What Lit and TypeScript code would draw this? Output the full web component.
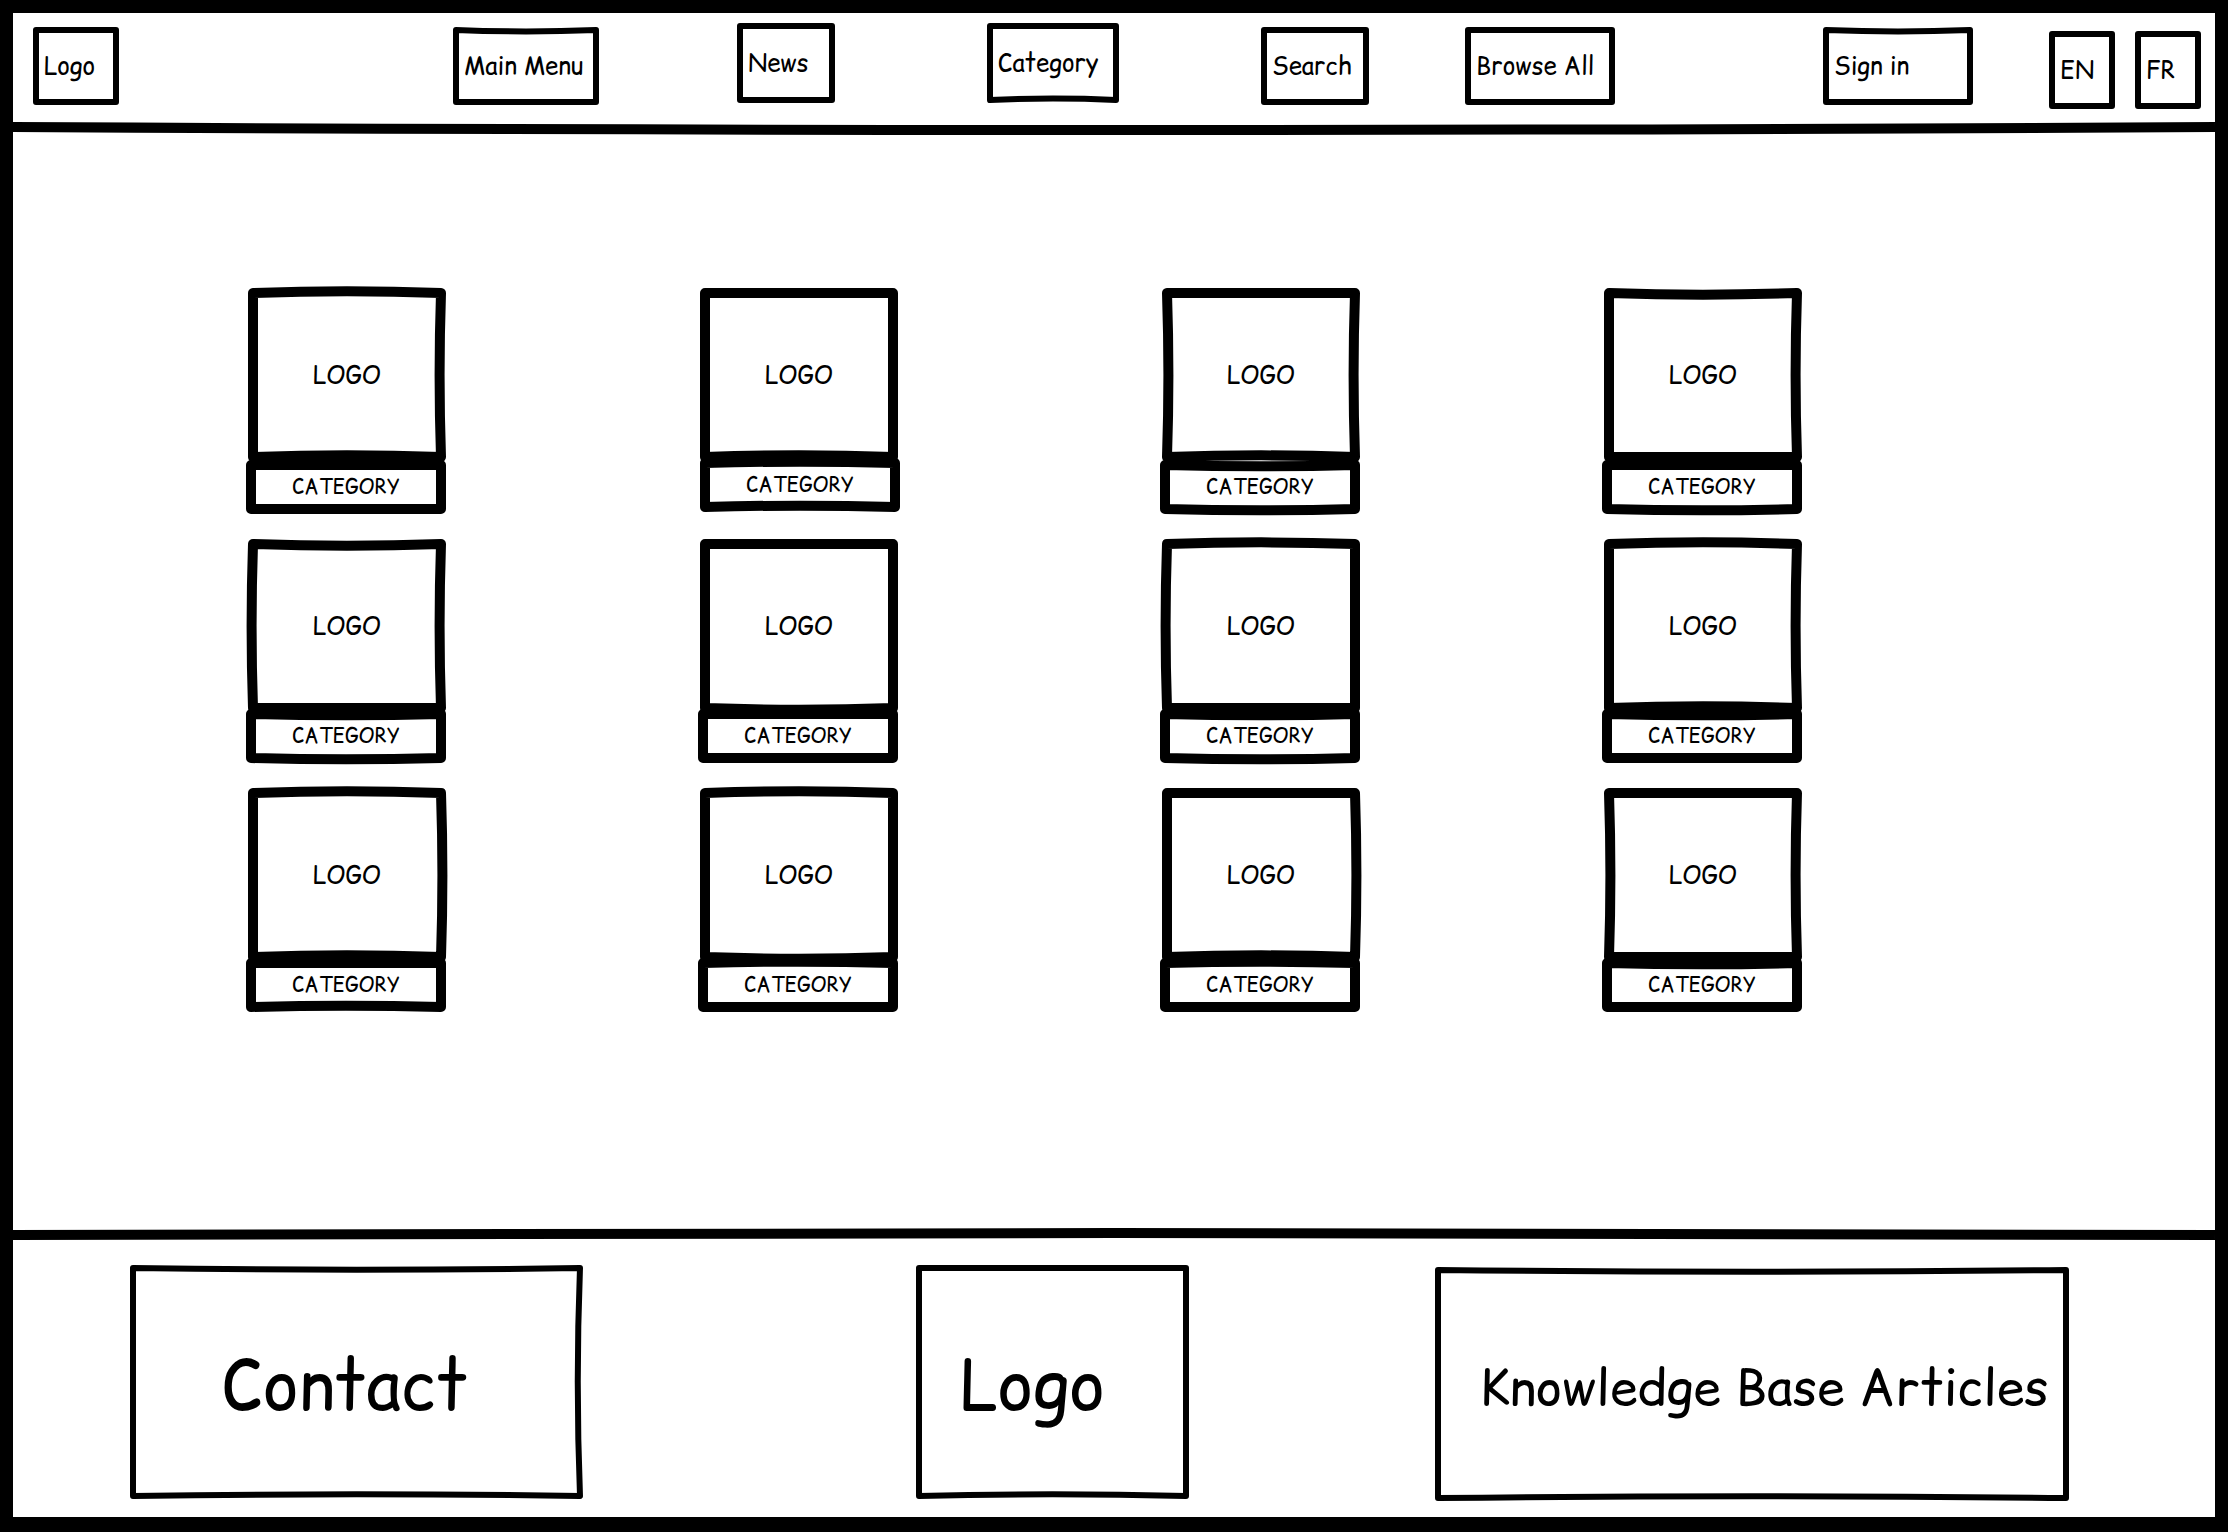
import { LitElement, html, css, svg } from "lit";
import { customElement, property } from "lit/decorators.js";

/** How far each side of a box bulges outward (negative: inward), in hundredths of the box. */
interface Bow {
  top?: number;
  right?: number;
  bottom?: number;
  left?: number;
}

/** A hand-drawn outline that fills its positioned parent. */
@customElement("sketch-outline")
class SketchOutline extends LitElement {
  @property({ attribute: false }) bow: Bow = {};

  static styles = css`
    :host {
      position: absolute;
      inset: calc(var(--stroke) / 2);
      pointer-events: none;
    }
    .outline {
      display: block;
      width: 100%;
      height: 100%;
      overflow: visible;
    }
    .edge {
      fill: none;
      stroke: #000;
      stroke-width: var(--stroke);
      stroke-linejoin: round;
      vector-effect: non-scaling-stroke;
    }
  `;

  render() {
    const { top = 0, right = 0, bottom = 0, left = 0 } = this.bow;
    const d = `M0 0 Q50 ${-top} 100 0 Q${100 + right} 50 100 100 Q50 ${100 + bottom} 0 100 Q${-left} 50 0 0 Z`;
    return html`<svg class="outline" viewBox="0 0 100 100" preserveAspectRatio="none" aria-hidden="true">
      ${svg`<path class="edge" d=${d} />`}
    </svg>`;
  }
}

/** A full-width hand-drawn rule whose middle sags or rises by a few pixels. */
@customElement("sketch-rule")
class SketchRule extends LitElement {
  @property({ type: Number }) sag = 0;

  static styles = css`
    :host {
      display: block;
      height: 10px;
    }
    .rule {
      display: block;
      width: 100%;
      height: 10px;
      overflow: visible;
    }
    .line {
      fill: none;
      stroke: #000;
      stroke-width: 10px;
      vector-effect: non-scaling-stroke;
    }
  `;

  render() {
    return html`<svg class="rule" viewBox="0 0 100 10" preserveAspectRatio="none" aria-hidden="true">
      ${svg`<path class="line" d=${`M0 5 Q50 ${5 + this.sag * 2} 100 5`} />`}
    </svg>`;
  }
}

interface Card {
  logo: Bow;
  label: Bow;
  fit?: "loose" | "shifted";
}

const CARDS: Card[] = [
  { logo: { top: 2, right: -1.5, bottom: -2 }, label: {}, fit: "loose" },
  { logo: { bottom: -2 }, label: { top: 6, bottom: -6 }, fit: "shifted" },
  { logo: { left: -1.5, right: -1.5, bottom: -2 }, label: { top: -6, bottom: 6 }, fit: "loose" },
  { logo: { top: -2, right: -1.5 }, label: { bottom: 6 }, fit: "loose" },
  { logo: { top: -2, right: -1.5, left: 1.5 }, label: { top: -6, bottom: 6 } },
  { logo: { bottom: 2 }, label: {} },
  { logo: { top: 2, left: 1.5 }, label: { top: -6, bottom: 6 } },
  { logo: { top: 2, right: -1.5, bottom: -2 }, label: { top: -6 } },
  { logo: { top: 2, right: 1.5, bottom: -2 }, label: { bottom: -6 } },
  { logo: { top: 2, bottom: 2 }, label: { top: 6 } },
  { logo: { right: 1.5, bottom: -2 }, label: { top: 6 } },
  { logo: { left: -1.5, right: -1.5 }, label: { top: -6 } },
];

@customElement("app-root")
class AppRoot extends LitElement {
  static styles = css`
    :host {
      display: flex;
      flex-direction: column;
      box-sizing: border-box;
      min-height: 100vh;
      border: 13px solid #000;
      border-bottom-width: 15px;
      background: #fff;
      color: #000;
      font-family: "Comic Relief", "Comic Sans MS", "Comic Neue", Lato, sans-serif;
      font-size: 24px;
      line-height: 30px;
    }
    * {
      box-sizing: border-box;
    }

    .header {
      display: grid;
      grid-template-columns: 420fr 284fr 250fr 274fr 204fr 358fr 226fr auto;
      align-items: start;
      padding: 10px 14px 13px 20px;
    }
    .box {
      --stroke: 6px;
      position: relative;
      display: flex;
      align-items: center;
      justify-content: flex-start;
      height: 78px;
      margin: 4px 0 0;
      padding: 0 11px;
      border: 0;
      background: none;
      color: inherit;
      font: inherit;
      text-decoration: none;
      white-space: nowrap;
      cursor: pointer;
    }
    .raised {
      height: 80px;
      margin-top: 0;
    }
    .lowered {
      margin-top: 8px;
    }
    .w-logo { width: 86px; }
    .w-menu { width: 146px; }
    .w-news { width: 98px; }
    .w-category { width: 132px; }
    .w-search { width: 108px; }
    .w-wide { width: 150px; }
    .w-lang { width: 66px; }
    .languages {
      display: flex;
      gap: 20px;
    }

    .catalogue {
      flex: 1;
      display: grid;
      grid-template-columns: 452fr 462fr 442fr 613fr;
      align-content: start;
      row-gap: 25px;
      padding: 156px 0 156px 233px;
    }
    .card {
      display: flex;
      flex-direction: column;
      width: 200px;
      color: inherit;
      text-decoration: none;
    }
    .card-logo,
    .card-label {
      --stroke: 10px;
      position: relative;
      display: flex;
      align-items: center;
      justify-content: center;
    }
    .card-logo {
      height: 174px;
      margin-left: 2px;
    }
    .card-label {
      height: 54px;
      margin-top: -4px;
      font-size: 20px;
    }
    .loose {
      margin-top: -2px;
    }
    .shifted {
      margin: -4px -2px 0 2px;
    }

    .footer {
      display: grid;
      grid-template-columns: 786fr 519fr 780fr;
      align-items: start;
      padding: 25px 0 16px 117px;
    }
    .panel {
      --stroke: 6px;
      position: relative;
      display: flex;
      align-items: center;
      height: 234px;
      padding: 6px 44px 0;
      color: inherit;
      font-size: 68px;
      line-height: 80px;
      text-decoration: none;
      white-space: nowrap;
    }
    .panel-contact {
      width: 453px;
      padding: 6px 92px 0;
    }
    .panel-logo {
      width: 273px;
    }
    .panel-articles {
      width: 634px;
      margin-top: 2px;
      font-size: 50px;
    }
  `;

  render() {
    return html`
      <header>
        <nav class="header" aria-label="Main">
          <a class="box w-logo" href="#home"><sketch-outline></sketch-outline>Logo</a>
          <a class="box w-menu" href="#menu"><sketch-outline .bow=${{ top: -4 }}></sketch-outline>Main Menu</a>
          <a class="box raised w-news" href="#news"><sketch-outline></sketch-outline>News</a>
          <a class="box raised w-category" href="#category"
            ><sketch-outline .bow=${{ bottom: -4 }}></sketch-outline>Category</a
          >
          <a class="box w-search" href="#search"><sketch-outline></sketch-outline>Search</a>
          <a class="box w-wide" href="#browse"><sketch-outline></sketch-outline>Browse All</a>
          <button class="box w-wide" type="button">
            <sketch-outline .bow=${{ top: -4 }}></sketch-outline>Sign in
          </button>
          <div class="languages">
            <button class="box lowered w-lang" type="button"><sketch-outline></sketch-outline>EN</button>
            <button class="box lowered w-lang" type="button"><sketch-outline></sketch-outline>FR</button>
          </div>
        </nav>
      </header>
      <sketch-rule .sag=${3}></sketch-rule>
      <main class="catalogue">
        ${CARDS.map(
          (card) => html`<a class="card" href="#category">
            <span class="card-logo"><sketch-outline .bow=${card.logo}></sketch-outline>LOGO</span>
            <span class="card-label ${card.fit ?? ""}"
              ><sketch-outline .bow=${card.label}></sketch-outline>CATEGORY</span
            >
          </a>`
        )}
      </main>
      <sketch-rule .sag=${-2}></sketch-rule>
      <footer class="footer">
        <a class="panel panel-contact" href="#contact"
          ><sketch-outline .bow=${{ top: -1.5, right: -1, bottom: -1.5 }}></sketch-outline>Contact</a
        >
        <a class="panel panel-logo" href="#home"
          ><sketch-outline .bow=${{ bottom: -1.5 }}></sketch-outline>Logo</a
        >
        <a class="panel panel-articles" href="#articles"
          ><sketch-outline .bow=${{ top: -1.5, bottom: -1.5 }}></sketch-outline>Knowledge Base Articles</a
        >
      </footer>
    `;
  }
}
